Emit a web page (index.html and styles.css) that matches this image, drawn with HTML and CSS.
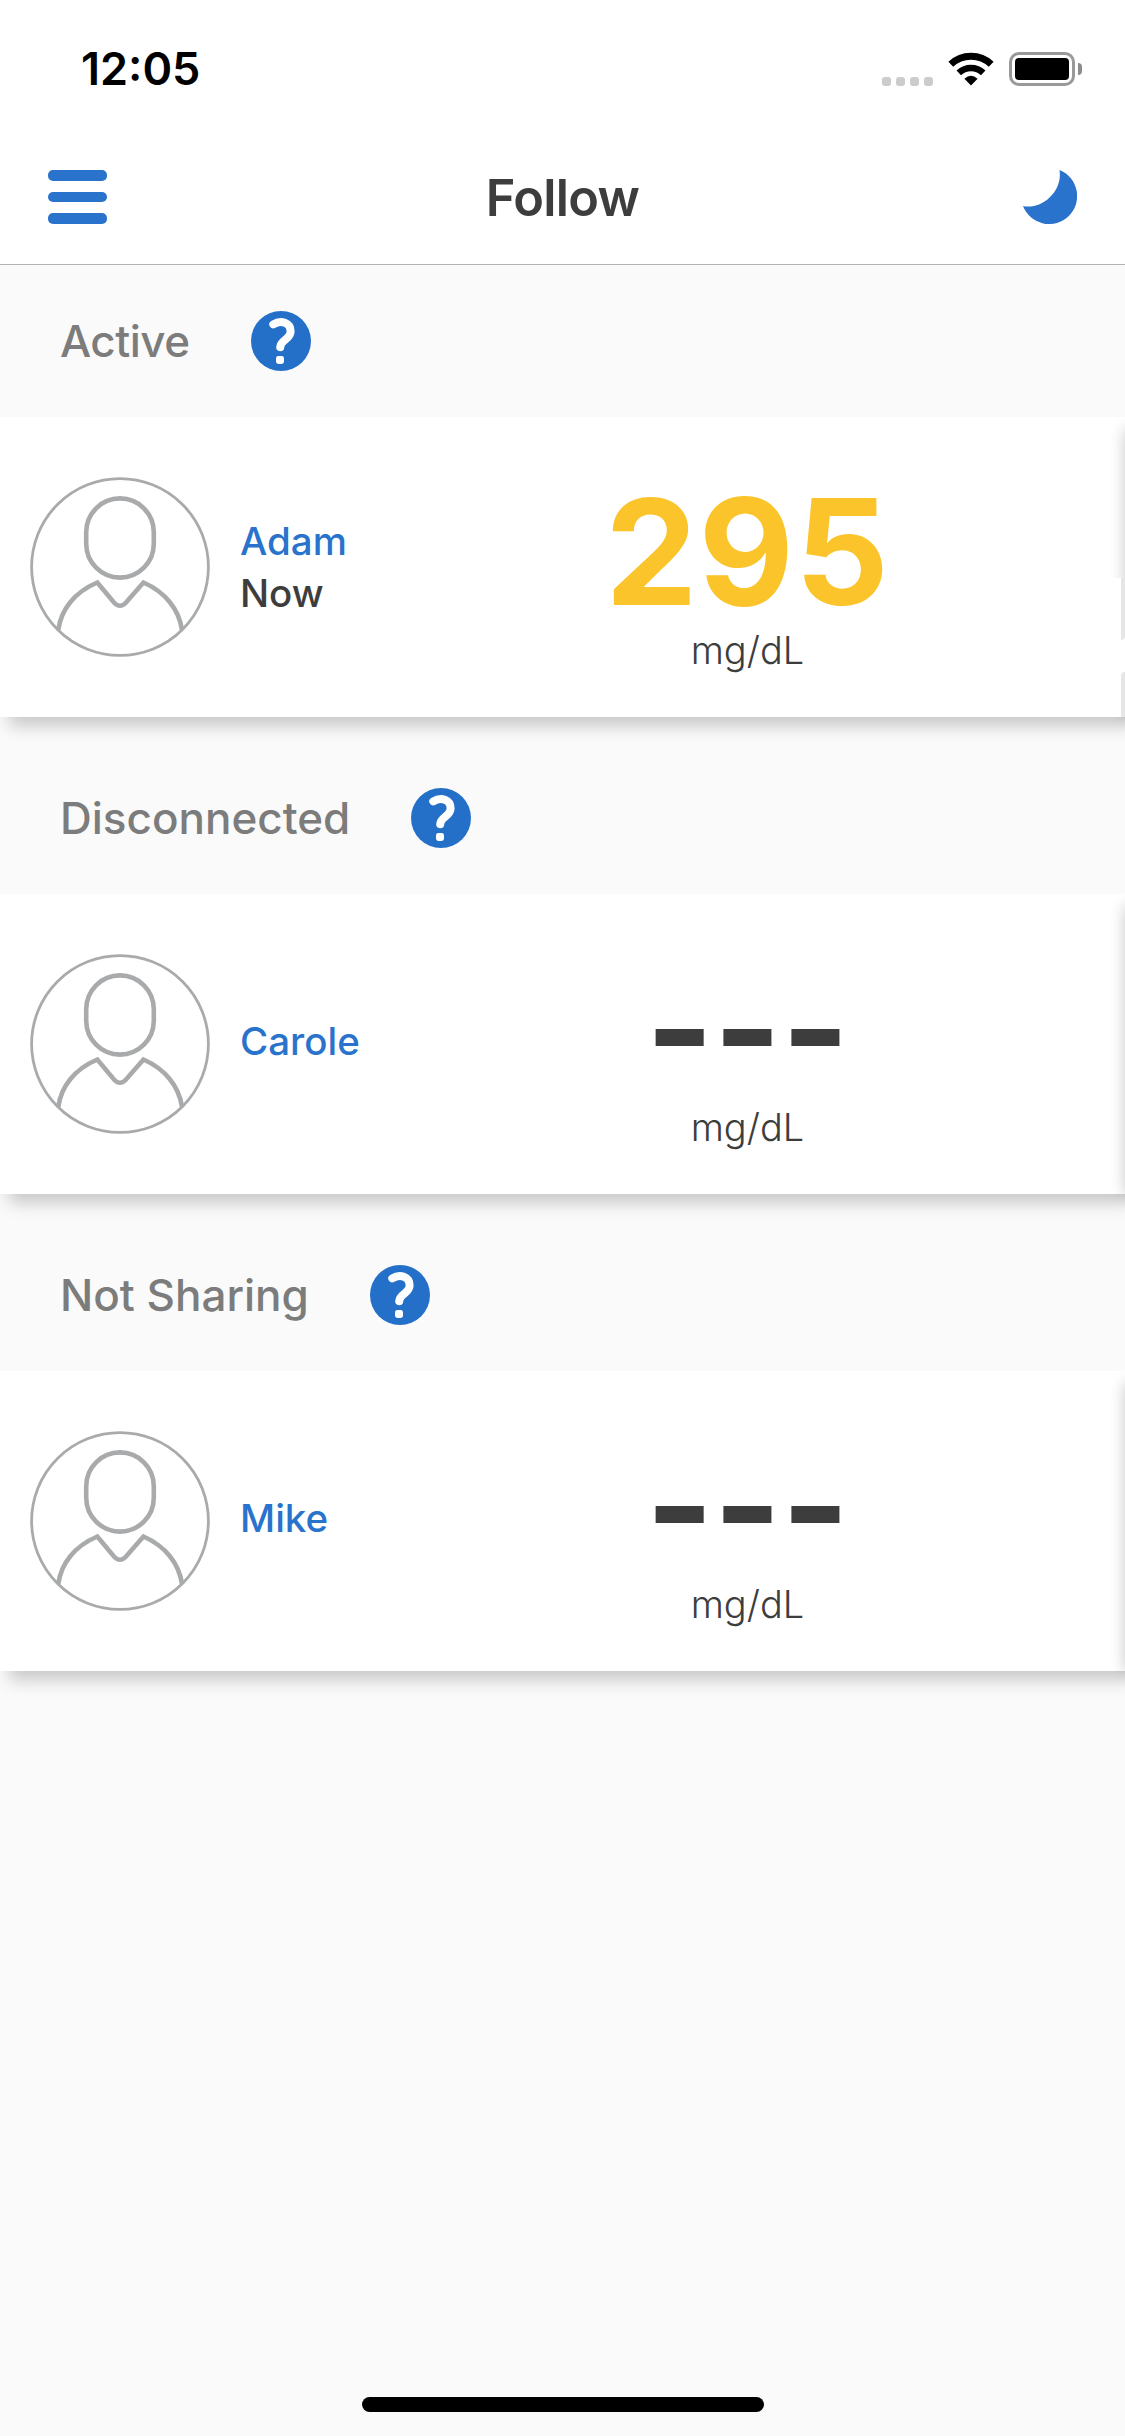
FILE: index.html
```
<!DOCTYPE html>
<html lang="en">
<head>
  <meta charset="UTF-8">
  <meta name="viewport" content="width=device-width, initial-scale=1.0">
  <title>Follow</title>
  <link rel="stylesheet" href="styles.css">
</head>
<body>
  <!-- shared icons -->
  <svg class="defs">
    <symbol id="help" viewBox="0 0 60 60">
      <circle cx="30" cy="30" r="30" fill="#2470c8"/>
      <path d="M22.3 13.4C30 8.6 39.6 11.6 39.6 20.5C39.6 28.5 29.6 28.5 29.2 36.2" fill="none" stroke="#fff" stroke-width="8" stroke-linecap="round"/>
      <rect x="25" y="45" width="8" height="8" rx="2.4" fill="#fff"/>
    </symbol>
    <symbol id="person" viewBox="0 0 180 180">
      <g fill="none" stroke="#a8aaab">
        <circle cx="90" cy="90" r="88.4" stroke-width="2.8"/>
        <rect x="56.2" y="21.4" width="67.6" height="79.2" rx="33.8" stroke-width="4.6"/>
        <path d="M28.3 153C31 132 45 115 67.3 105.5L84 125.5Q90 132 96 125.5L113.5 105.5C135 115 149 132 152 153" stroke-width="4.6"/>
      </g>
    </symbol>
  </svg>

  <div class="status-bar">
    <span class="time">12:05</span>
    <div class="status-icons">
      <div class="signal"><i></i><i></i><i></i><i></i></div>
      <svg class="wifi" width="46" height="34" viewBox="0 0 46 34">
        <g fill="none" stroke="#000">
          <path d="M2.8 12.2A29.5 29.5 0 0 1 43.2 12.2" stroke-width="7"/>
          <path d="M10.8 20.8A17.8 17.8 0 0 1 35.2 20.8" stroke-width="6.6"/>
        </g>
        <path d="M23 33.5L16.4 26.8Q23 20.8 29.6 26.8Z"/>
      </svg>
      <div class="battery"><div class="battery-level"></div></div>
      <div class="battery-cap"></div>
    </div>
  </div>

  <div class="nav">
    <div class="menu"><i></i><i></i><i></i></div>
    <h1>Follow</h1>
    <svg class="moon" width="54" height="54" viewBox="0 0 54 54">
      <path d="M36.5 0A28 28 0 1 1 0 36C18 40 40 22 36.5 0Z" fill="#2a73cc"/>
    </svg>
  </div>

  <div class="section">
    <div class="section-head">
      <h2 class="tight">Active</h2>
      <svg class="help"><use href="#help"/></svg>
    </div>
    <div class="card">
      <svg class="avatar"><use href="#person"/></svg>
      <div class="who with-time">
        <div class="name">Adam</div>
        <div class="when">Now</div>
      </div>
      <div class="reading">
        <div class="value high">295</div>
        <div class="unit">mg/dL</div>
      </div>
      <div class="drawer-edge"><i></i><i></i></div>
    </div>
  </div>

  <div class="section">
    <div class="section-head">
      <h2>Disconnected</h2>
      <svg class="help"><use href="#help"/></svg>
    </div>
    <div class="card">
      <svg class="avatar"><use href="#person"/></svg>
      <div class="who">
        <div class="name">Carole</div>
      </div>
      <div class="reading">
        <div class="value">---</div>
        <div class="unit">mg/dL</div>
      </div>
    </div>
  </div>

  <div class="section">
    <div class="section-head">
      <h2>Not Sharing</h2>
      <svg class="help"><use href="#help"/></svg>
    </div>
    <div class="card">
      <svg class="avatar"><use href="#person"/></svg>
      <div class="who">
        <div class="name">Mike</div>
      </div>
      <div class="reading">
        <div class="value">---</div>
        <div class="unit">mg/dL</div>
      </div>
    </div>
  </div>

  <div class="home-bar"></div>
</body>
</html>
```
FILE: styles.css
```
* {
  box-sizing: border-box;
}
body {
  margin: 0;
  height: 2436px;
  display: flex;
  flex-direction: column;
  overflow: hidden;
  background: #fafafa;
  color: #3d3d3d;
  font-family: Inter, "Liberation Sans", sans-serif;
}
h1, h2 {
  margin: 0;
}
.defs {
  display: none;
}

/* status bar */
.status-bar {
  height: 132px;
  padding: 0 43px 0 81px;
  display: flex;
  justify-content: space-between;
  align-items: flex-start;
  background: #fff;
}
.time {
  margin-top: 42px;
  font-size: 45px;
  line-height: 54px;
  font-weight: 600;
  color: #000;
}
.status-icons {
  display: flex;
  align-items: center;
  margin-top: 52px;
  height: 34px;
}
.signal {
  display: flex;
  gap: 5px;
  margin: 24px 15px 0 0;
}
.signal i {
  width: 9px;
  height: 9px;
  border-radius: 3px;
  background: #ccc;
}
.wifi {
  margin-right: 15px;
}
.battery {
  width: 66px;
  height: 34px;
  padding: 3px;
  border: 3px solid #999;
  border-radius: 10px;
}
.battery-level {
  height: 22px;
  border-radius: 4px;
  background: #000;
}
.battery-cap {
  width: 4px;
  height: 12px;
  margin-left: 3px;
  border-radius: 0 4px 4px 0;
  background: #8c8c8c;
}

/* nav bar */
.nav {
  height: 133px;
  padding: 0 48px 2px;
  display: flex;
  justify-content: space-between;
  align-items: center;
  background: #fff;
  border-bottom: 1px solid #b2b2b2;
}
.menu {
  width: 59px;
  display: flex;
  flex-direction: column;
  gap: 11px;
}
.menu i {
  height: 10.5px;
  border-radius: 5px;
  background: #2a73cc;
}
.nav h1 {
  font-size: 50.5px;
  font-weight: 600;
  letter-spacing: -0.7px;
}
.moon {
  margin-left: 5px;
}

/* sections */
.section {
  margin-bottom: 25px;
}
.section-head {
  height: 152px;
  padding-left: 60px;
  display: flex;
  align-items: center;
  gap: 61px;
}
.section-head h2 {
  font-size: 44px;
  font-weight: 500;
  color: #7c7c7c;
}
.section-head .tight {
  letter-spacing: -0.5px;
}
.help {
  width: 60px;
  height: 60px;
}
.card {
  position: relative;
  height: 300px;
  padding-left: 30px;
  display: flex;
  align-items: center;
  background: #fff;
  box-shadow: 9px 9px 16px rgba(0, 0, 0, 0.2);
  clip-path: inset(0 0 -40px 0);
}
.avatar {
  width: 180px;
  height: 180px;
  margin-right: 30px;
}
.who {
  width: 240px;
  padding-bottom: 6px;
  font-size: 38.5px;
  line-height: 52px;
  font-weight: 500;
}
.with-time {
  padding-bottom: 0;
}
.name {
  color: #2a73cc;
}
.reading {
  width: 535px;
  padding-top: 15px;
  text-align: center;
}
.value {
  height: 150px;
  font-size: 145px;
  line-height: 150px;
  font-weight: 700;
}
.high {
  font-size: 147px;
  letter-spacing: 1px;
  color: #fac42a;
}
.unit {
  font-size: 38px;
  line-height: 46px;
  font-weight: 300;
}

/* shadow of the drawer waiting off the right side */
.card::before {
  content: "";
  position: absolute;
  top: 12px;
  left: 100%;
  width: 40px;
  height: 288px;
  box-shadow: 0 0 16px rgba(0, 0, 0, 0.22);
}
.drawer-edge {
  position: absolute;
  right: 0;
  bottom: 0;
  width: 20px;
  height: 139px;
  display: flex;
  flex-direction: column;
  justify-content: space-between;
  align-items: flex-end;
  background: #fff;
}
.drawer-edge i {
  width: 4px;
  height: 62px;
  border-bottom-right-radius: 4px;
  background: #e6e6e6;
}
.drawer-edge i:last-child {
  height: 45px;
  border-radius: 4px 0 0 0;
}

.home-bar {
  width: 402px;
  height: 15px;
  margin: auto auto 24px;
  border-radius: 8px;
  background: #000;
}
```
